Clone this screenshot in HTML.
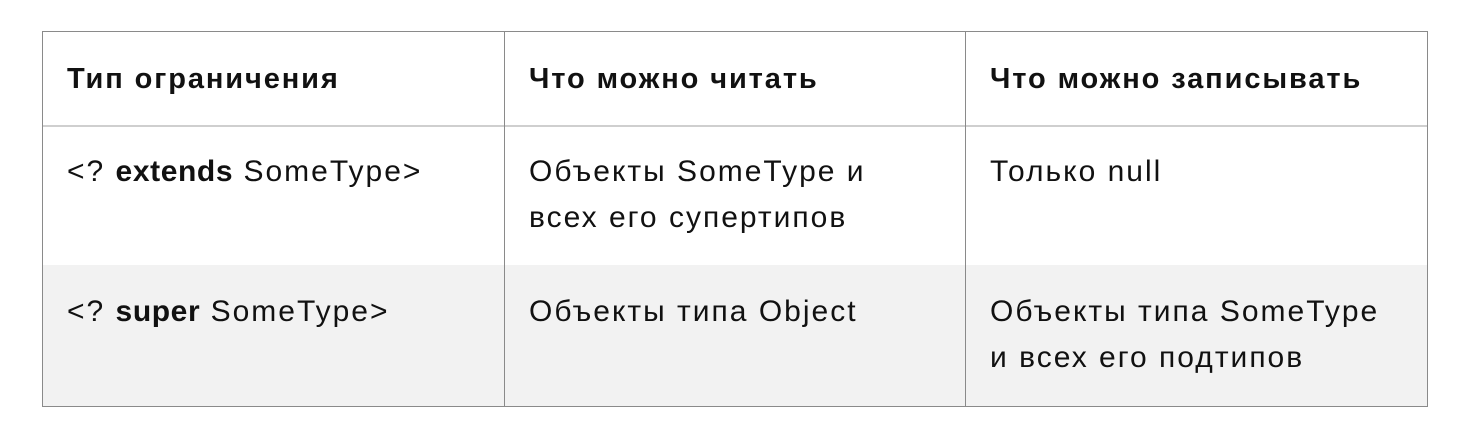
<!DOCTYPE html>
<html><head><meta charset="utf-8"><style>
body{margin:0;width:1478px;height:438px;background:#fff;font-family:"Liberation Sans",sans-serif;color:#111;position:relative;overflow:hidden}
.box{position:absolute;left:42px;top:31px;width:1384px;height:374px;border:1px solid #8a8a8a}
.hl{position:absolute;left:43px;width:1384px;top:125px;height:2px;background:#cfcfcf}
.g{position:absolute;left:43px;top:265px;width:1384px;height:141px;background:#f2f2f2}
.v{position:absolute;top:32px;height:374px;width:1px;background:#8a8a8a}
.t{position:absolute;font-size:30px;line-height:46px;white-space:nowrap;letter-spacing:2px}
.t b{letter-spacing:0.6px}
.h{font-weight:bold;font-size:29px;letter-spacing:1.9px}
</style></head><body>
<div class="g"></div>
<div class="box"></div>
<div class="hl"></div>
<div class="v" style="left:504px"></div>
<div class="v" style="left:965px"></div>
<div class="t h" style="left:67px;top:56px">Тип ограничения</div>
<div class="t h" style="left:529px;top:56px">Что можно читать</div>
<div class="t h" style="left:990px;top:56px">Что можно записывать</div>
<div class="t" style="left:67px;top:149px">&lt;? <b>extends</b> SomeType&gt;</div>
<div class="t" style="left:529px;top:149px">Объекты SomeType и<br>всех его супертипов</div>
<div class="t" style="left:990px;top:149px">Только null</div>
<div class="t" style="left:67px;top:289px">&lt;? <b>super</b> SomeType&gt;</div>
<div class="t" style="left:529px;top:289px">Объекты типа Object</div>
<div class="t" style="left:990px;top:289px">Объекты типа SomeType<br>и всех его подтипов</div>
</body></html>
